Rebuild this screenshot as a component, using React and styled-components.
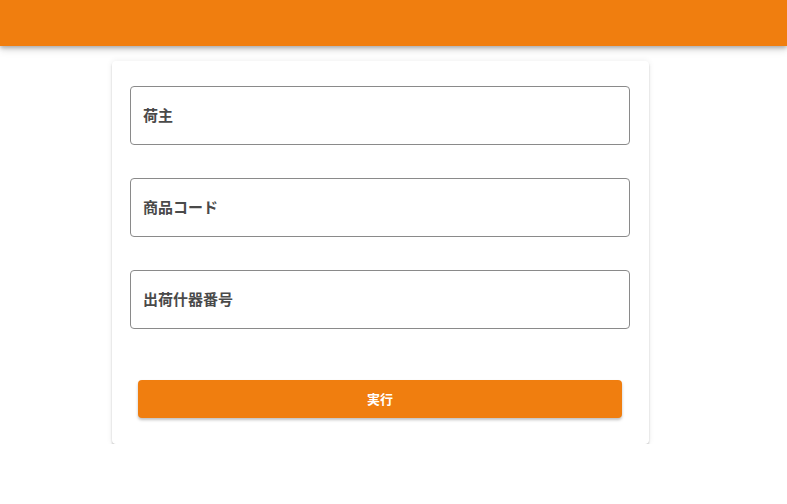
import styled, { createGlobalStyle } from "styled-components";

const Global = createGlobalStyle`
  body {
    margin: 0;
    background: #fff;
    font-family: "Noto Sans CJK JP", "Noto Sans", sans-serif;
  }
`;

const Header = styled.header`
  height: 46px;
  background: #f07e0f;
  box-shadow: 0 2px 4px rgba(0, 0, 0, 0.25), 0 4px 8px rgba(0, 0, 0, 0.12);
`;

const Main = styled.main`
  padding: 15px 0 0 112px;
`;

const Card = styled.div`
  width: 537px;
  box-sizing: border-box;
  padding: 25px 19px 26px 18px;
  background: #fff;
  border-radius: 4px;
  box-shadow: 0 2px 2px rgba(0, 0, 0, 0.2), 0 0 6px rgba(0, 0, 0, 0.08);
  display: flex;
  flex-direction: column;
  gap: 33px;
`;

const Field = styled.input`
  display: block;
  width: 100%;
  height: 59px;
  box-sizing: border-box;
  border: 1px solid #8a8a8a;
  border-radius: 4px;
  padding: 0 12px 2px;
  font-family: inherit;
  font-size: 15px;
  font-weight: 700;
  color: #4a4a4a;
  outline: none;
  &::placeholder {
    color: #4a4a4a;
    opacity: 1;
  }
`;

const Actions = styled.div`
  padding: 18px 8px 0;
`;

const Submit = styled.button`
  width: 100%;
  height: 38px;
  border: none;
  border-radius: 4px;
  background: #f07e0f;
  color: #fff;
  font-family: inherit;
  font-size: 13px;
  font-weight: 700;
  padding: 0 0 2px;
  box-shadow: 0 2px 3px rgba(0, 0, 0, 0.25);
  cursor: pointer;
`;

const fields = ["荷主", "商品コード", "出荷什器番号"];

export default function App() {
  return (
    <>
      <Global />
      <Header />
      <Main>
        <Card>
          {fields.map((f) => (
            <Field key={f} placeholder={f} />
          ))}
          <Actions>
            <Submit>実行</Submit>
          </Actions>
        </Card>
      </Main>
    </>
  );
}
